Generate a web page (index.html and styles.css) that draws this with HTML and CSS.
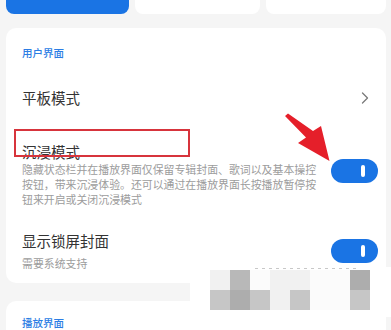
FILE: index.html
```html
<!DOCTYPE html>
<html lang="zh">
<head>
<meta charset="utf-8">
<link rel="stylesheet" href="styles.css">
</head>
<body>
<div class="top">
  <div class="tab tab-active"></div>
  <div class="tab"></div>
  <div class="tab"></div>
</div>

<div class="card">
  <div class="section-label">用户界面</div>

  <div class="row row-nav">
    <span class="title">平板模式</span>
    <svg class="chevron" width="8" height="12" viewBox="0 0 8 12"><path d="M1.5 1 L6.5 6 L1.5 11" fill="none" stroke="#7a7a7a" stroke-width="1.3" stroke-linecap="round" stroke-linejoin="round"/></svg>
  </div>

  <div class="row row-switch row-immersive">
    <div class="text">
      <div class="title">沉浸模式</div>
      <div class="desc">隐藏状态栏并在播放界面仅保留专辑封面、歌词以及基本操控按钮，带来沉浸体验。还可以通过在播放界面长按播放暂停按钮来开启或关闭沉浸模式</div>
    </div>
    <div class="switch"><span class="knob"></span></div>
  </div>

  <div class="row row-switch row-lock">
    <div class="text">
      <div class="title">显示锁屏封面</div>
      <div class="desc">需要系统支持</div>
    </div>
    <div class="switch"><span class="knob"></span></div>
  </div>
</div>

<div class="card card-second">
  <div class="section-label section-label-second">播放界面</div>
</div>

<div class="highlight-box"></div>

<svg class="arrow" width="60" height="60" viewBox="280 108 60 60">
  <polygon points="285,116 288,113.5 313,131 321,126 329.5,161 298,143 306,137.5" fill="#e51f2a"/>
</svg>

<div class="watermark">
  <div class="wm-line"></div>
  <div class="mosaic">
    <span class="c1"></span><span class="c4"></span><span class="c0"></span><span class="c1"></span><span class="c1"></span><span class="c0"></span><span class="c0"></span><span class="c5"></span>
    <span class="c3"></span><span class="c5"></span><span class="c3"></span><span class="c1"></span><span class="c3"></span><span class="c0"></span><span class="c0"></span><span class="c3"></span>
  </div>
</div>
</body>
</html>
```

FILE: styles.css
```css
* { box-sizing: border-box; }

html, body {
  margin: 0;
  padding: 0;
}

body {
  width: 391px;
  height: 330px;
  overflow: hidden;
  background: #f5f5f5;
  font-family: "Noto Sans CJK SC", "Noto Sans", sans-serif;
  position: relative;
}

.top {
  display: grid;
  grid-template-columns: 123px 125px 1fr;
  gap: 6px;
  height: 14px;
  padding: 0 5px 0 6px;
}

.tab {
  background: #ffffff;
  border-radius: 0 0 8px 8px;
}

.tab-active {
  background: #1a74e4;
}

.card {
  margin: 14px 5px 0 6px;
  background: #ffffff;
  border-radius: 10px;
  padding-bottom: 12px;
}

.card-second {
  margin-top: 18px;
  height: 30px;
  padding-bottom: 0;
  border-radius: 10px 10px 0 0;
}

.section-label {
  padding: 18px 16px 0;
  font-size: 10.5px;
  line-height: 14px;
  color: #2b7de4;
  font-weight: 500;
}

.section-label-second {
  padding-top: 15px;
}

.row {
  display: flex;
  padding: 0 16px;
}

.row-nav {
  margin-top: 14px;
  height: 48px;
  align-items: center;
  justify-content: space-between;
  padding-right: 17px;
}

.title {
  font-size: 14.5px;
  line-height: 20px;
  color: #333333;
}

.desc {
  font-size: 10.9px;
  line-height: 15px;
  color: #9c9c9c;
}

.row-switch {
  align-items: flex-start;
  justify-content: space-between;
  padding-right: 8px;
}

.row-immersive {
  padding-top: 19.5px;
}

.row-immersive .desc {
  width: 297px;
  margin-top: 0;
}

.row-immersive .switch {
  margin-top: 17.5px;
}

.row-lock {
  padding-top: 24.5px;
}

.row-lock .desc {
  margin-top: 4.5px;
}

.row-lock .switch {
  margin-top: 8px;
}

.switch {
  width: 47px;
  height: 24px;
  border-radius: 12px;
  background: #1a74e4;
  display: flex;
  align-items: center;
  justify-content: flex-end;
  padding-right: 13px;
  flex: none;
}

.knob {
  width: 4px;
  height: 12px;
  border-radius: 2px;
  background: #ffffff;
}

.highlight-box {
  position: absolute;
  left: 14px;
  top: 129px;
  width: 176px;
  height: 28px;
  border: 2px solid #d7343c;
}

.arrow {
  position: absolute;
  left: 280px;
  top: 108px;
}

.watermark {
  position: absolute;
  left: 190px;
  top: 267px;
  width: 201px;
  height: 50px;
  background: #ffffff;
  padding: 1px 0 0 20px;
}

.wm-line {
  height: 1px;
  margin: 0 33px 0 45px;
  background: repeating-linear-gradient(90deg, #c8c8c8 0 3px, transparent 3px 7px);
}

.mosaic {
  margin-top: 1px;
  display: grid;
  grid-template-columns: repeat(8, 20px);
  grid-auto-rows: 20px;
}

.c0 { background: #fbfbfb; }
.c1 { background: #f1f1f1; }
.c3 { background: #c6c6c6; }
.c4 { background: #b8b8b8; }
.c5 { background: #adadad; }
```
